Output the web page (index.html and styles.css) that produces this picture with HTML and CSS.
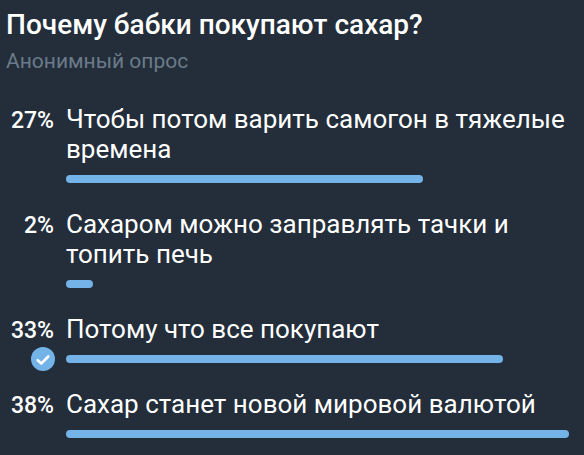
FILE: index.html
```
<!DOCTYPE html>
<html lang="ru">
<head>
<meta charset="UTF-8">
<meta name="viewport" content="width=device-width, initial-scale=1.0">
<title>Опрос</title>
<link rel="stylesheet" href="styles.css">
</head>
<body>
  <div class="poll">
    <h1 class="question">Почему бабки покупают сахар?</h1>
    <p class="poll-type">Анонимный опрос</p>

    <ul class="options">
      <li class="option">
        <span class="percent">27%</span>
        <span class="answer">Чтобы потом варить самогон в тяжелые времена</span>
        <div class="track"><div class="bar" style="width: 71%"></div></div>
      </li>
      <li class="option">
        <span class="percent">2%</span>
        <span class="answer">Сахаром можно заправлять тачки и топить печь</span>
        <div class="track"><div class="bar" style="width: 5.3%"></div></div>
      </li>
      <li class="option">
        <span class="percent">33%</span>
        <span class="answer">Потому что все покупают</span>
        <svg class="check" viewBox="0 0 24 24" role="img" aria-label="Ваш выбор">
          <circle cx="12" cy="12" r="12" fill="#73b3e7"/>
          <path d="M6.7 13.2l3.6 3.3 7-7" fill="none" stroke="#fff" stroke-width="2.6" stroke-linecap="round" stroke-linejoin="round"/>
        </svg>
        <div class="track"><div class="bar" style="width: 86.8%"></div></div>
      </li>
      <li class="option">
        <span class="percent">38%</span>
        <span class="answer">Сахар станет новой мировой валютой</span>
        <div class="track"><div class="bar" style="width: 100%"></div></div>
      </li>
    </ul>
  </div>
</body>
</html>
```
FILE: styles.css
```
body {
  margin: 0;
  background-color: #232e3a;
  color: #fff;
  font-family: Roboto, sans-serif;
}
.poll {
  padding: 8px 15px 16px 6px;
}
.question {
  margin: 0;
  font-size: 28px;
  line-height: 34px;
  font-weight: 500;
}
.poll-type {
  margin: 4px 0 0;
  font-size: 21px;
  line-height: 30px;
  color: #6b7b8a;
}
.options {
  display: grid;
  gap: 26px;
  margin: 28px 0 0;
  padding: 0;
  list-style: none;
}
.option {
  display: grid;
  grid-template-columns: 48px 1fr;
  column-gap: 12px;
  row-gap: 11px;
  align-items: baseline;
}
.percent {
  font-size: 23px;
  line-height: 26px;
  font-weight: 500;
  text-align: right;
}
.answer {
  font-size: 26px;
  line-height: 30px;
}
.track {
  grid-column: 2;
  align-self: start;
}
.bar {
  height: 8px;
  border-radius: 4px;
  background-color: #73b3e7;
}
.check {
  width: 24px;
  height: 24px;
  margin: -8px -1px -8px 0;
  align-self: start;
  justify-self: end;
}
```
